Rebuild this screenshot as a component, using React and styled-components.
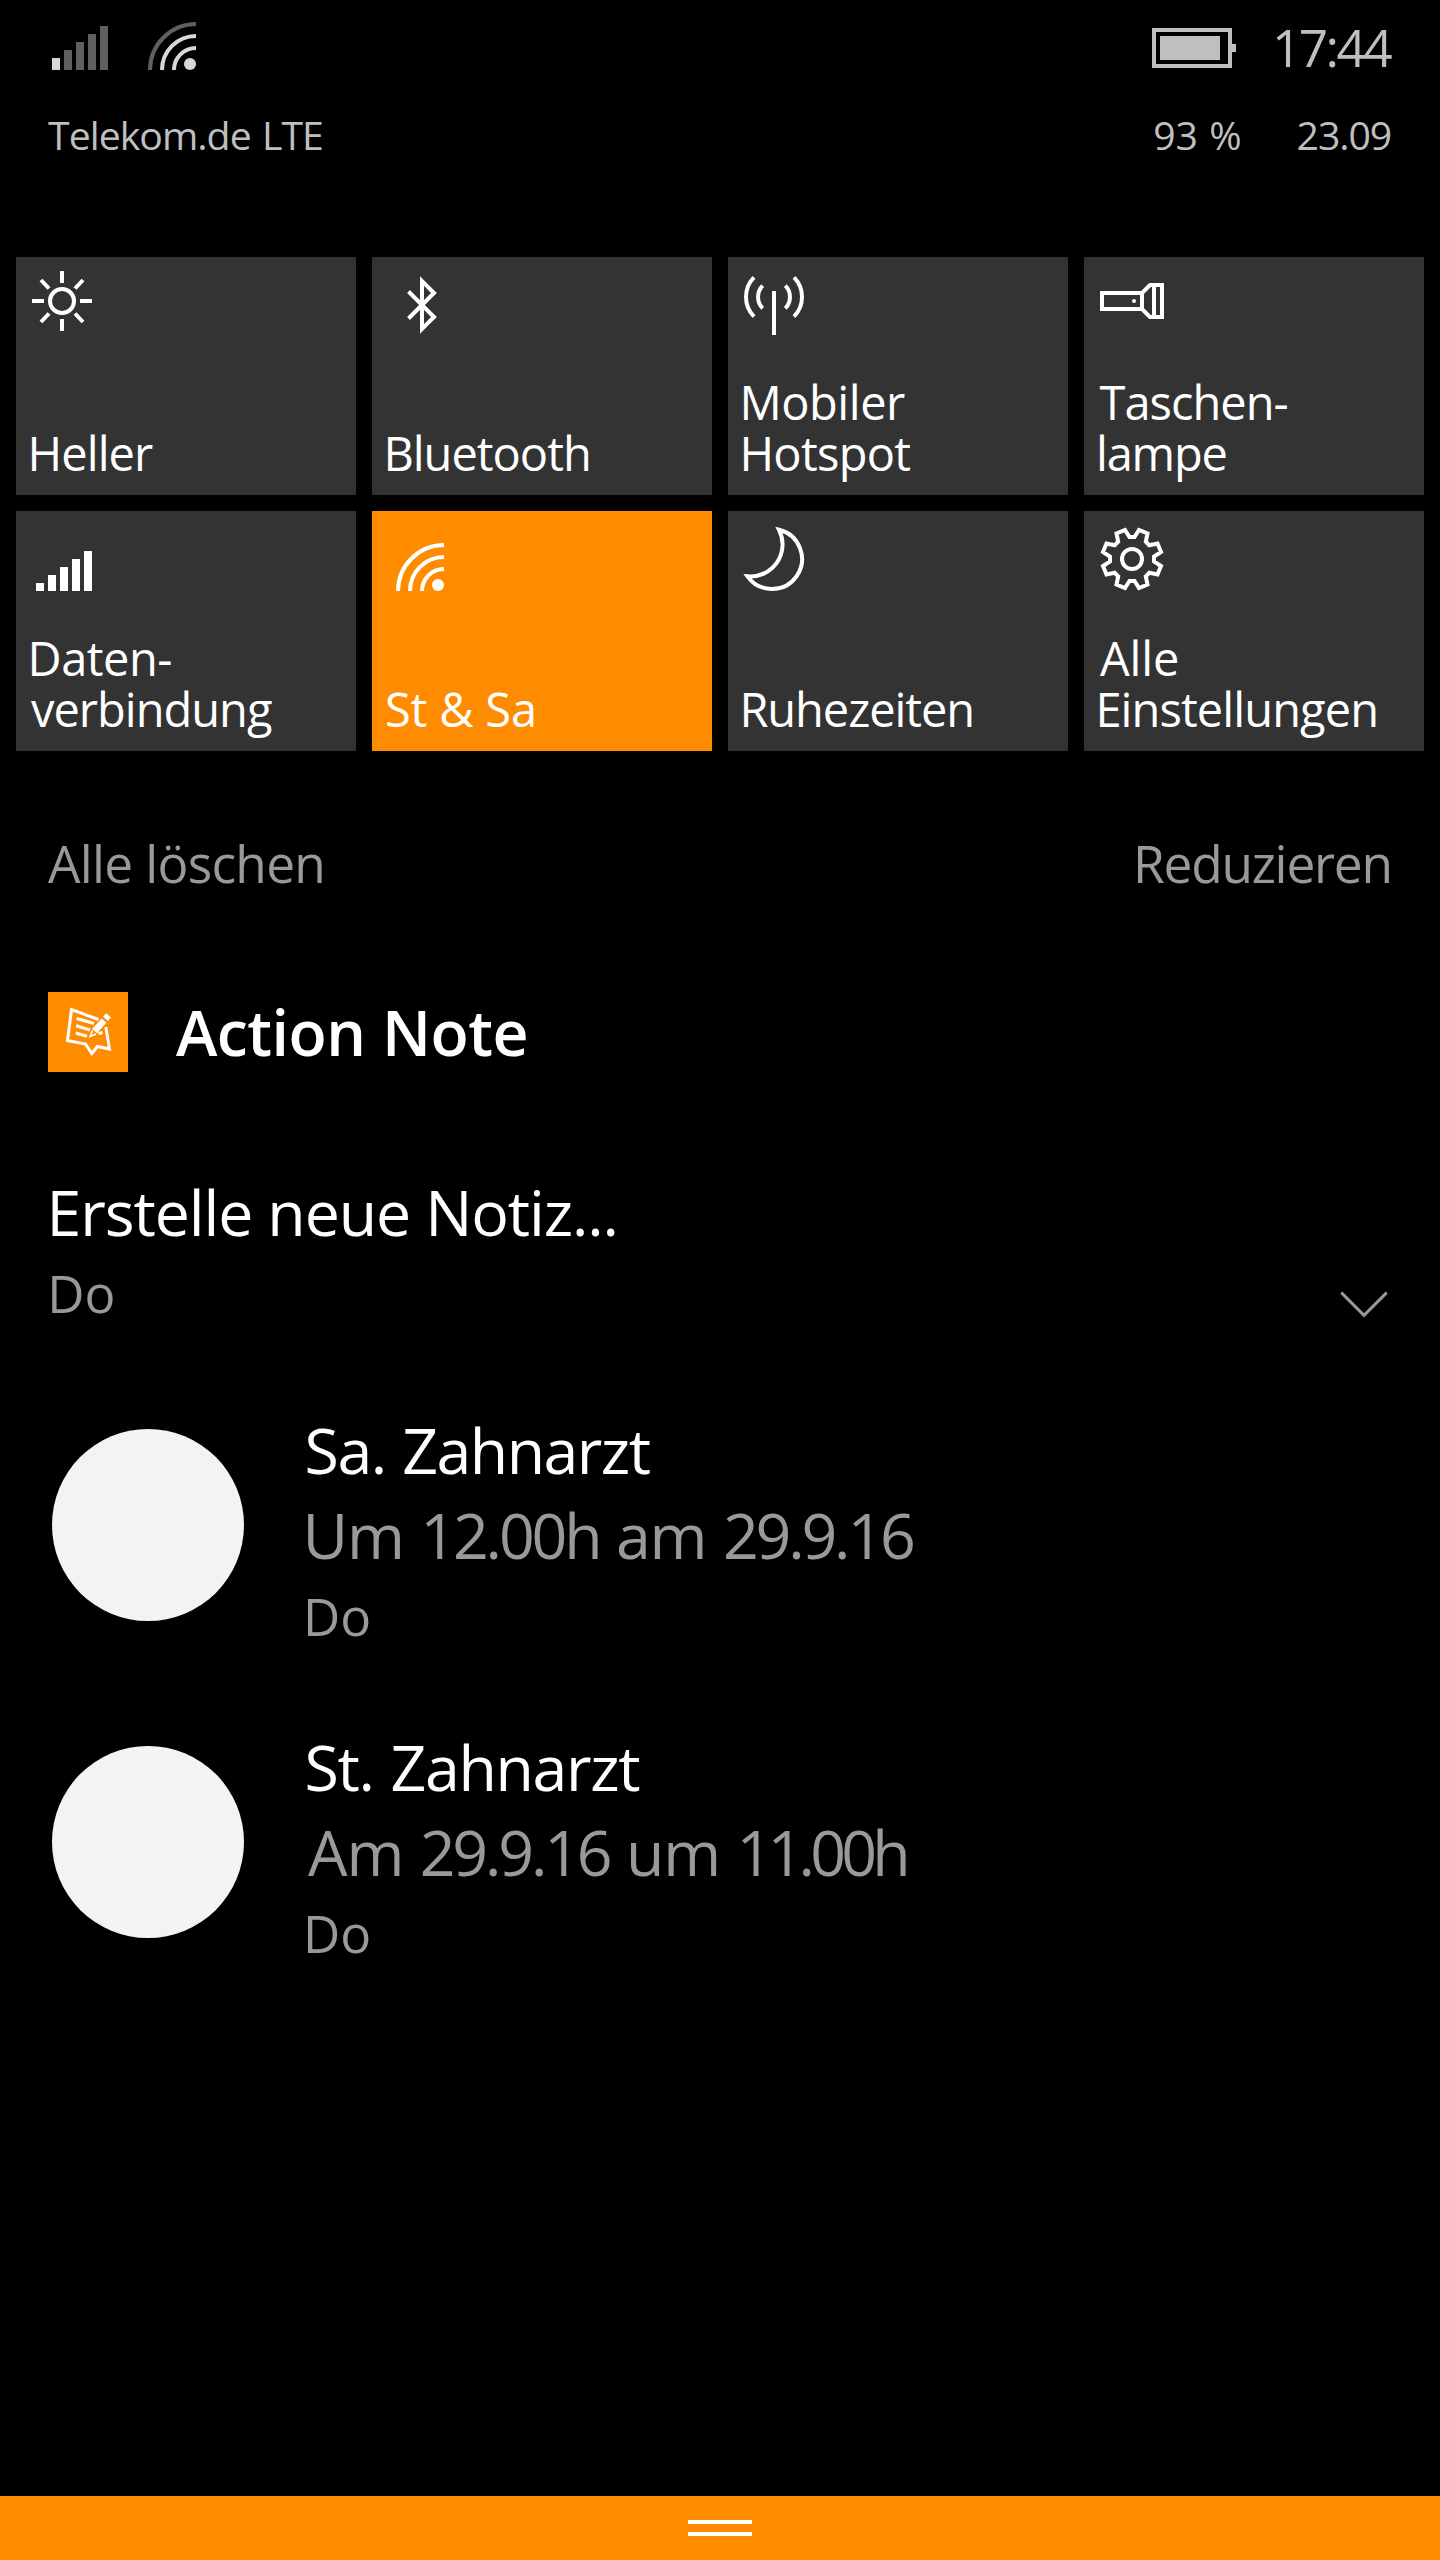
import React from "react";
import styled, { createGlobalStyle } from "styled-components";

const ACCENT = "#ff8c00";

// one quarter of the cog outline, the rest is the same points rotated
const COG_QUARTER = [
  [2.5, -22],
  [7, -29],
  [15.5, -25.5],
  [13.8, -17.3],
  [17.3, -13.8],
  [25.5, -15.5],
  [29, -7],
  [22, -2.5],
];

const cogPoints = [0, 1, 2, 3]
  .flatMap((turn) =>
    COG_QUARTER.map((point) => {
      let [x, y] = point;
      for (let i = 0; i < turn; i++) [x, y] = [-y, x];
      return `${48 + x},${48 + y}`;
    })
  )
  .join(" ");

const SunIcon = () => (
  <TileIcon>
    <circle cx="46" cy="44" r="12" />
    <path d="M46 14v12M46 62v12M16 44h12M64 44h12M25 23l8 8.500M67 23l-8 8.500M25 65l8-8.500M67 65l-8-8.500" />
  </TileIcon>
);

const BluetoothIcon = () => (
  <TileIcon>
    <path d="M36.500 34.500L62 60L50 72V24L62 36L36.500 61.500" />
  </TileIcon>
);

const HotspotIcon = () => (
  <TileIcon>
    <path d="M46 34V78" />
    <path d="M26 20.400A28 28 0 0 0 26 59.600M66 20.400A28 28 0 0 1 66 59.600" />
    <path d="M34.700 28.700A16 16 0 0 0 34.700 51.300M57.300 28.700A16 16 0 0 1 57.300 51.300" />
  </TileIcon>
);

const TorchIcon = () => (
  <TileIcon>
    <path d="M18 36H58L66 28H78V60H66L58 52H18ZM58 36V52M70 28V60" />
    <circle cx="50" cy="44" r="2" fill="#fff" stroke="none" />
  </TileIcon>
);

const DataIcon = () => (
  <TileIcon>
    <path
      fill="#fff"
      stroke="none"
      d="M20 72h8v8h-8zM32 64h8v16h-8zM44 56h8v24h-8zM56 48h8v32h-8zM68 40h8v40h-8z"
    />
  </TileIcon>
);

const WifiIcon = () => (
  <TileIcon>
    <path d="M26 80A46 46 0 0 1 72 34M38 80A34 34 0 0 1 72 46M50 80A22 22 0 0 1 72 58" />
    <circle cx="66" cy="74" r="6" fill="#fff" stroke="none" />
  </TileIcon>
);

const MoonIcon = () => (
  <TileIcon>
    <path d="M51 18.800A30 30 0 1 1 19.500 65.300A32 32 0 0 0 51 18.800Z" />
  </TileIcon>
);

const CogIcon = () => (
  <TileIcon>
    <polygon points={cogPoints} />
    <circle cx="48" cy="48" r="10" />
  </TileIcon>
);

// label lines are [text, indent, letter spacing]
const tiles = [
  { icon: <SunIcon />, lines: [["Heller", 11.6, -0.95]] },
  { icon: <BluetoothIcon />, lines: [["Bluetooth", 11.4, -1]] },
  { icon: <HotspotIcon />, lines: [["Mobiler", 11.4, -0.45], ["Hotspot", 11.4, -0.7]] },
  { icon: <TorchIcon />, lines: [["Taschen-", 15.5, -1], ["lampe", 12, -1.2]] },
  { icon: <DataIcon />, lines: [["Daten-", 11.6, -0.5], ["verbindung", 15, -1]] },
  { icon: <WifiIcon />, active: true, lines: [["St & Sa", 13, -0.17]] },
  { icon: <MoonIcon />, lines: [["Ruhezeiten", 11.4, -1.06]] },
  { icon: <CogIcon />, lines: [["Alle", 16, -0.13], ["Einstellungen", 11.4, -0.9]] },
];

// body runs are [text, letter spacing], digits are set tighter than words
const notes = [
  {
    title: "Sa. Zahnarzt",
    titleSpacing: -1.53,
    indent: 2.6,
    body: [["Um ", -1.2], ["12.00h", -3.15], [" am ", -1.2], ["29.9.16", -3.15]],
  },
  {
    title: "St. Zahnarzt",
    titleSpacing: -1.35,
    indent: 8,
    body: [["Am ", -1.2], ["29.9.16", -3.15], [" um ", -1.2], ["11.00h", -4.8]],
  },
];

const App = () => {
  return (
    <>
      <GlobalStyle />
      <Screen>
        <StatusBar>
          <StatusLeft>
            <StatusIcons>
              <SignalSvg viewBox="0 0 56 44">
                <path fill="#d8d8d8" d="M0 32h8v12H0z" />
                <path fill="#606060" d="M12 24h8v20h-8zM24 16h8v28h-8zM36 8h8v36h-8zM48 0h8v44h-8z" />
              </SignalSvg>
              <WifiSvg viewBox="0 0 48 48" fill="none" strokeWidth="4">
                <path stroke="#606060" d="M2 48A46 46 0 0 1 48 2" />
                <path stroke="#d8d8d8" d="M14 48A34 34 0 0 1 48 14M26 48A22 22 0 0 1 48 26" />
                <circle cx="42" cy="42" r="6" fill="#d8d8d8" />
              </WifiSvg>
            </StatusIcons>
            <SmallText $spacing={-0.95} $word={2}>
              Telekom.de LTE
            </SmallText>
          </StatusLeft>
          <StatusRight>
            <BatterySvg viewBox="0 0 84 40">
              <rect x="2" y="2" width="76" height="36" fill="none" stroke="#bfbfbf" strokeWidth="4" />
              <path fill="#bfbfbf" d="M8 8h60v24H8zM80 16h4v8h-4z" />
            </BatterySvg>
            <Clock>17:44</Clock>
            <SmallText $indent={1.2} $word={1}>
              93 %
            </SmallText>
            <SmallText $indent={24.6} $spacing={-1.1}>
              23.09
            </SmallText>
          </StatusRight>
        </StatusBar>

        <TileGrid>
          {tiles.map((tile) => (
            <Tile key={tile.lines[0][0]} $active={tile.active}>
              {tile.icon}
              <div>
                {tile.lines.map(([text, indent, spacing]) => (
                  <TileLabel key={text} $indent={indent} $spacing={spacing}>
                    {text}
                  </TileLabel>
                ))}
              </div>
            </Tile>
          ))}
        </TileGrid>

        <Actions>
          <Action $spacing={-0.7}>Alle löschen</Action>
          <Action $spacing={-1.2} $width={259}>
            Reduzieren
          </Action>
        </Actions>

        <AppHeader>
          <AppIcon viewBox="0 0 80 80" fill="none" stroke="#fff" strokeWidth="3">
            <path d="M50.500 27.500L23.500 17.500L19.500 48.500L37.500 52L43.800 61.500L49.500 54.500L61.500 57L57.800 35" />
            <path d="M28.700 26.500L46 31.500M28.200 33.700L42 38M27.800 41L39 44.300" />
            <path strokeWidth="6.500" d="M46.500 39.200L56 28.600M57.500 26.900L60.600 23.400" />
            <path strokeWidth="1.500" d="M44.500 38.500L42 44.500L48 42" />
            <path d="M50.500 41.500L54.500 40.500" />
          </AppIcon>
          <AppName>Action Note</AppName>
        </AppHeader>

        <NewNote>
          <Title $indent={-1.4} $spacing={-1.1}>
            Erstelle neue Notiz...
          </Title>
          <NewNoteMeta>
            <Day $indent={-0.7}>Do</Day>
            <Chevron viewBox="0 0 48 27">
              <path d="M1.300 1.600L24 24.300L46.700 1.600" />
            </Chevron>
          </NewNoteMeta>
        </NewNote>

        {notes.map((note) => (
          <Note key={note.title}>
            <Avatar />
            <div>
              <Title $indent={4.6} $spacing={note.titleSpacing} $word={2}>
                {note.title}
              </Title>
              <Body $indent={note.indent} $word={1.5}>
                {note.body.map(([text, spacing]) => (
                  <Run key={text} $spacing={spacing}>
                    {text}
                  </Run>
                ))}
              </Body>
              <Day $indent={3}>Do</Day>
            </div>
          </Note>
        ))}

        <BottomBar>
          <Grip />
          <Grip />
        </BottomBar>
      </Screen>
    </>
  );
};

const GlobalStyle = createGlobalStyle`
  body {
    margin: 0;
    background: #000;
  }
`;

const Screen = styled.div`
  display: flex;
  flex-direction: column;
  width: 1440px;
  height: 2560px;
  background: #000;
  color: #fff;
  font-family: "Segoe UI", "Open Sans", sans-serif;
  overflow: hidden;
`;

const Text = styled.div`
  margin-left: ${(props) => props.$indent || 0}px;
  letter-spacing: ${(props) => props.$spacing || 0}px;
  word-spacing: ${(props) => props.$word || 0}px;
  white-space: pre;
`;

const Run = styled.span`
  letter-spacing: ${(props) => props.$spacing}px;
`;

const StatusBar = styled.div`
  display: flex;
  justify-content: space-between;
  height: 148px;
  padding: 14px 48px 0 48px;
  color: #bfbfbf;
`;

const StatusLeft = styled.div`
  display: flex;
  flex-direction: column;
`;

const StatusIcons = styled.div`
  display: flex;
  align-items: flex-start;
  gap: 40px;
  height: 94px;
  padding-left: 4px;
`;

const StatusRight = styled.div`
  display: grid;
  grid-template-columns: 120px 120px;
  grid-template-rows: 94px 54px;
`;

const SignalSvg = styled.svg`
  width: 56px;
  height: 44px;
  margin-top: 12px;
`;

const WifiSvg = styled.svg`
  width: 48px;
  height: 48px;
  margin-top: 8px;
`;

const BatterySvg = styled.svg`
  width: 84px;
  height: 40px;
  margin-top: 14px;
`;

const Clock = styled.div`
  font-size: 51.4px;
  line-height: 66px;
  letter-spacing: -2.6px;
`;

const SmallText = styled(Text)`
  font-size: 39.2px;
  line-height: 54px;
`;

const TileGrid = styled.div`
  display: grid;
  grid-template-columns: repeat(4, 340px);
  grid-template-rows: 238px 240px;
  gap: 16px;
  margin: 95px 16px 0 16px;
`;

const Tile = styled.div`
  display: flex;
  flex-direction: column;
  justify-content: space-between;
  padding-bottom: 16px;
  background: ${(props) => (props.$active ? ACCENT : "#333")};
`;

const TileIcon = styled.svg.attrs({ viewBox: "0 0 96 96" })`
  width: 96px;
  height: 96px;
  fill: none;
  stroke: #fff;
  stroke-width: 4;
  stroke-miterlimit: 10;
`;

const TileLabel = styled(Text)`
  font-size: 47px;
  line-height: 51px;
`;

const Actions = styled.div`
  display: flex;
  justify-content: space-between;
  margin-top: 77px;
  padding: 0 48px;
`;

const Action = styled(Text)`
  width: ${(props) => (props.$width ? `${props.$width}px` : "auto")};
  color: #999;
  font-size: 51.4px;
  line-height: 70px;
`;

const AppHeader = styled.div`
  display: flex;
  gap: 48px;
  margin-top: 94px;
  padding-left: 48px;
`;

const AppIcon = styled.svg`
  width: 80px;
  height: 80px;
  background: ${ACCENT};
`;

const AppName = styled.div`
  font-size: 62.6px;
  font-weight: 600;
  line-height: 80px;
  letter-spacing: -0.55px;
  word-spacing: 1px;
`;

const NewNote = styled.div`
  margin-top: 98px;
  padding: 0 52px 0 48px;
`;

const NewNoteMeta = styled.div`
  display: flex;
  justify-content: space-between;
`;

const Title = styled(Text)`
  font-size: 62.6px;
  line-height: 84px;
`;

const Body = styled(Text)`
  color: #999;
  font-size: 62.6px;
  line-height: 85px;
`;

const Day = styled(Text)`
  color: #999;
  font-size: 51.4px;
  line-height: 78px;
`;

const Chevron = styled.svg`
  width: 48px;
  height: 27px;
  margin-top: 37px;
  fill: none;
  stroke: #999;
  stroke-width: 3;
`;

const Note = styled.div`
  display: flex;
  gap: 56px;
  margin-top: 70px;
  padding-left: 52px;

  ${NewNote} + & {
    margin-top: 76px;
  }
`;

const Avatar = styled.div`
  width: 192px;
  height: 192px;
  margin-top: 21px;
  border-radius: 50%;
  background: #f3f3f3;
`;

const BottomBar = styled.div`
  display: flex;
  flex-direction: column;
  align-items: center;
  gap: 8px;
  box-sizing: border-box;
  height: 64px;
  margin-top: auto;
  padding-top: 24px;
  background: ${ACCENT};
`;

const Grip = styled.div`
  width: 64px;
  height: 4px;
  background: #fff;
`;

export default App;
